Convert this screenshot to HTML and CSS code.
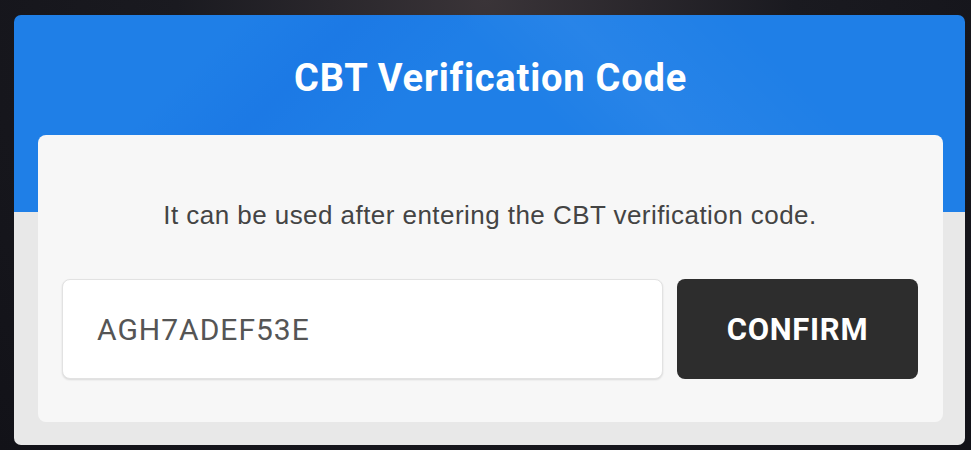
FILE: index.html
```html
<!DOCTYPE html>
<html lang="en">
<head>
  <meta charset="UTF-8">
  <title>CBT Verification Code</title>
  <link rel="stylesheet" href="styles.css">
</head>
<body>
  <div class="modal">
    <h1 class="modal-title">CBT Verification Code</h1>
    <div class="card">
      <p class="desc">It can be used after entering the CBT verification code.</p>
      <div class="code-row">
        <input class="code-input" type="text" value="AGH7ADEF53E">
        <button class="confirm-btn">CONFIRM</button>
      </div>
    </div>
  </div>
</body>
</html>
```

FILE: styles.css
```css
body { margin: 0; height: 450px; overflow: hidden; background: radial-gradient(ellipse at 50% 0%, #3a3438 0%, #1a1a20 45%, #121218 100%); font-family: Roboto, "Liberation Sans", sans-serif; }
.modal { width: 951px; height: 430px; margin: 15px 0 0 14px; box-sizing: border-box; padding: 0 22px 23px 24px; border-radius: 7px; display: flex; flex-direction: column;
  background:
    linear-gradient(135deg, rgba(0,70,210,0) 20%, rgba(0,70,210,0.10) 30%, rgba(0,70,210,0) 42%) 0 0 / 100% 197px no-repeat,
    linear-gradient(45deg, rgba(255,255,255,0) 55%, rgba(255,255,255,0.04) 65%, rgba(255,255,255,0) 80%) 0 0 / 100% 197px no-repeat,
    linear-gradient(#1f7fe7 0, #1f7fe7 197px, #e8e8e8 197px); }
.modal-title { margin: 0; height: 120px; display: flex; align-items: center; justify-content: center; color: #fff; font-size: 38px; font-weight: bold; letter-spacing: 0.8px; padding-top: 5px; box-sizing: border-box; }
.card { flex: 1; background: #f7f7f7; border-radius: 8px; padding: 64px 25px 0 24px; display: flex; flex-direction: column; }
.desc { margin: 0; text-align: center; font-family: "Liberation Sans", Arial, sans-serif; font-size: 26px; letter-spacing: 0.45px; line-height: 32px; color: #444; }
.code-row { display: flex; gap: 14px; margin-top: 48px; height: 100px; }
.code-input { flex: 1; min-width: 0; border: 1px solid #e2e2e2; border-radius: 8px; background: #fff; padding: 0 34px; font-family: Roboto, sans-serif; font-size: 30px; letter-spacing: 1px; color: #555; box-shadow: 0 1px 2px rgba(0,0,0,0.12); outline: none; }
.confirm-btn { width: 241px; flex: none; border: none; border-radius: 8px; background: #2d2d2d; color: #fff; font-family: Roboto, sans-serif; font-size: 31px; font-weight: bold; letter-spacing: 0.7px; }
```
